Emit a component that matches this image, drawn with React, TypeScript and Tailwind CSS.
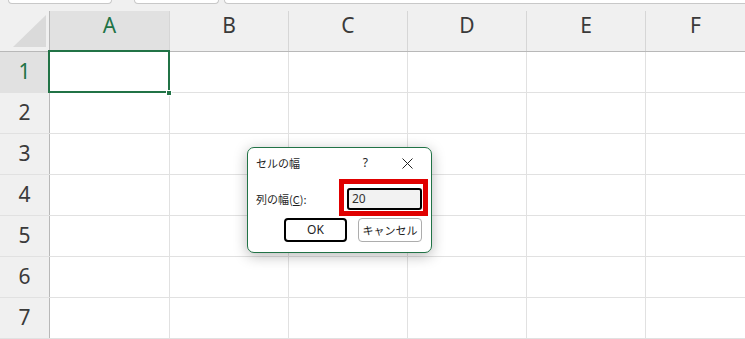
import React from 'react';

const cols = [
  { label: 'A', w: 'w-[120px]', sel: true },
  { label: 'B', w: 'w-[119px]', sel: false },
  { label: 'C', w: 'w-[119px]', sel: false },
  { label: 'D', w: 'w-[119px]', sel: false },
  { label: 'E', w: 'w-[119px]', sel: false },
  { label: 'F', w: 'flex-1', sel: false },
];

const rows = [1, 2, 3, 4, 5, 6, 7];

function CellDialog() {
  return (
    <div className="absolute left-[247px] top-[147px] w-[185px] h-[106px] bg-white border border-[#217346] rounded-[7px] shadow-[0_3px_14px_rgba(0,0,0,0.28)] font-['Noto_Sans_CJK_JP','Noto_Sans',sans-serif] text-[#1f1f1f]">
      {/* Title */}
      <div className="h-[30px] flex items-center pl-[8px] pr-[18px]">
        <span className="text-[11px] flex-1">セルの幅</span>
        <span className="text-[12px] font-['Noto_Sans',sans-serif] mr-[34px]">?</span>
        <svg width="11" height="11" viewBox="0 0 11 11">
          <path d="M0.5 0.5 L10.5 10.5 M10.5 0.5 L0.5 10.5" stroke="#222" strokeWidth="1" />
        </svg>
      </div>

      {/* Width input */}
      <div className="mt-[10px] flex items-center pl-[8px] h-[22px]">
        <span className="w-[91px] text-[11px]">
          列の幅(<span className="underline">C</span>):
        </span>
        <div className="w-[75px] h-[22px] border-2 border-black rounded-[3px] bg-[#f2f2f2] flex items-center pl-[3px] text-[12px] font-['Noto_Sans',sans-serif] text-[#333]">
          20
        </div>
      </div>

      {/* Buttons */}
      <div className="mt-[8px] flex pl-[36px] gap-[11px]">
        <button className="w-[63px] h-[24px] border-2 border-black rounded-[4px] bg-white text-[12px] font-['Noto_Sans',sans-serif] text-[#222]">
          OK
        </button>
        <button className="w-[64px] h-[24px] border border-[#adadad] rounded-[4px] bg-white text-[11px] text-[#222]">
          キャンセル
        </button>
      </div>

      {/* Highlight annotation */}
      <div className="absolute left-[91px] top-[31px] w-[89px] h-[37px] border-[5px] border-[#e00000]" />
    </div>
  );
}

export default function App() {
  return (
    <div className="relative w-[745px] h-[339px] overflow-hidden bg-white font-['Noto_Sans',sans-serif]">
      {/* Toolbar remnant */}
      <div className="h-[11px] bg-[#f0f0f0] flex items-start pl-[8px]">
        <div className="w-[104px] h-[4px] bg-white border-x border-b border-[#c8c8c8] rounded-b-[5px]" />
        <div className="w-[85px] h-[4px] ml-[22px] bg-white border-x border-b border-[#c8c8c8] rounded-b-[5px]" />
        <div className="flex-1 h-[4px] ml-[5px] bg-white border-l border-b border-[#c8c8c8] rounded-bl-[5px]" />
      </div>

      {/* Column headers */}
      <div className="flex h-[41px] bg-[#f0f0f0] border-b border-[#b8b8b8]">
        <div className="w-[50px] border-r border-[#b8b8b8]">
          <svg width="49" height="40">
            <polygon points="13,36 46,36 46,4" fill="#dadada" />
          </svg>
        </div>
        {cols.map((c) => (
          <div
            key={c.label}
            className={`${c.w} flex items-center justify-center pb-[11px] text-[21px] ${
              c.sel ? 'bg-[#e1e1e1] text-[#217346]' : 'text-[#3a3a3a]'
            } ${c.label !== 'F' ? 'border-r border-[#d6d6d6]' : ''}`}
          >
            {c.label}
          </div>
        ))}
      </div>

      {/* Rows */}
      {rows.map((r) => (
        <div key={r} className="flex h-[41px] border-b border-[#e1e1e1]">
          <div
            className={`w-[50px] border-r border-[#b8b8b8] flex items-center justify-center text-[21px] ${
              r === 1 ? 'bg-[#e1e1e1] text-[#217346]' : 'bg-[#f0f0f0] text-[#3a3a3a]'
            }`}
          >
            {r}
          </div>
          {cols.map((c) => (
            <div
              key={c.label}
              className={`${c.w} ${c.label !== 'F' ? 'border-r border-[#e1e1e1]' : ''}`}
            />
          ))}
        </div>
      ))}

      {/* Active cell A1 */}
      <div className="absolute left-[48px] top-[50px] w-[122px] h-[43px] border-2 border-[#217346]" />
      <div className="absolute left-[166px] top-[90px] w-[6px] h-[6px] bg-[#217346] border border-white" />

      <CellDialog />
    </div>
  );
}
